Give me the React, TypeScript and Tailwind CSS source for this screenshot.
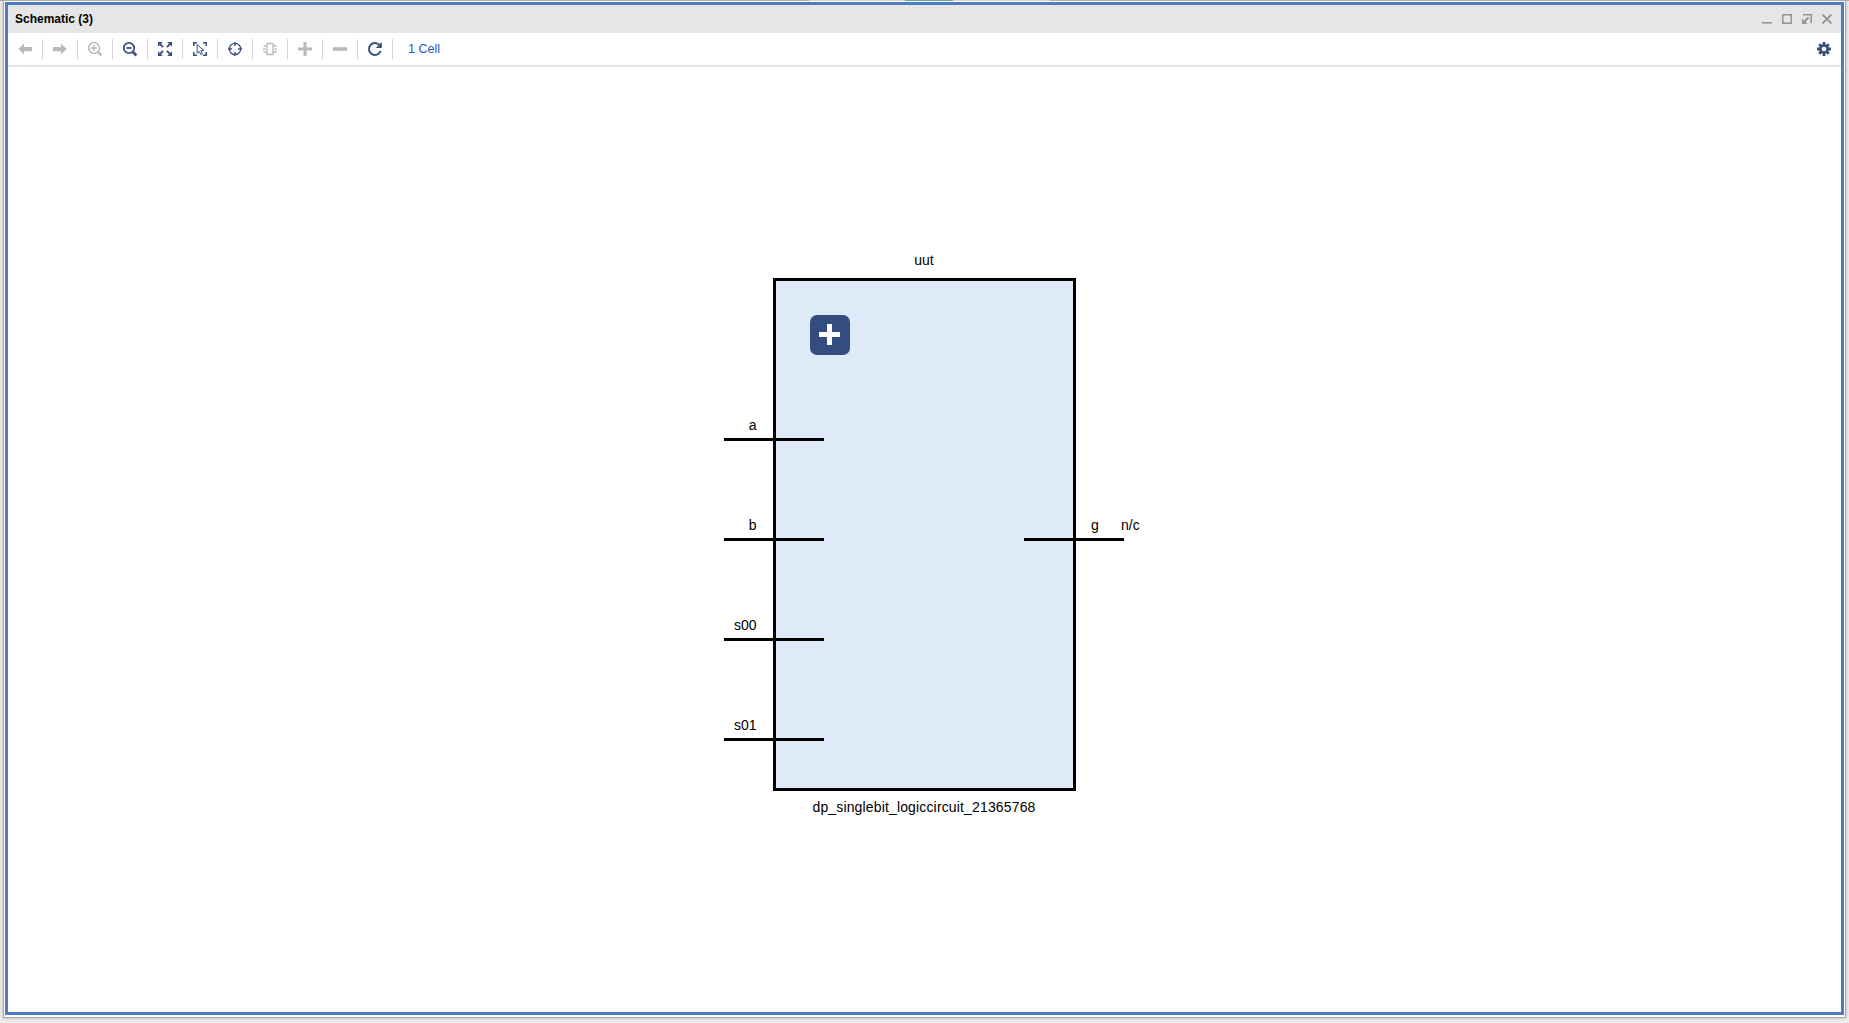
import type { ReactNode } from "react";

const NAVY = "#3a5180";
const GREY = "#bababa";

function Icon({ children, color = NAVY }: { children: ReactNode; color?: string }) {
  return (
    <svg width="20" height="20" viewBox="0 0 20 20" fill="none" stroke={color} color={color}>
      {children}
    </svg>
  );
}

function Tool({ children }: { children: ReactNode }) {
  return (
    <div className="flex h-5 w-[35px] items-center justify-center border-r border-[#d4d4d4]">{children}</div>
  );
}

function Toolbar() {
  return (
    <div className="flex h-[34px] shrink-0 items-center border-b-2 border-[#e4e4e4] bg-white">
      <Tool>
        <Icon color={GREY}>
          <path d="M3.3 10 9 4.6V8h8v4.2H9v3.2z" fill="currentColor" stroke="none" />
        </Icon>
      </Tool>
      <Tool>
        <Icon color={GREY}>
          <path d="M16.7 10 11 4.6V8H3v4.2h8v3.2z" fill="currentColor" stroke="none" />
        </Icon>
      </Tool>
      <Tool>
        <Icon color={GREY}>
          <circle cx="9" cy="9" r="5.4" strokeWidth="1.5" />
          <path d="M6 9h6M9 6v6" strokeWidth="1.4" />
          <path d="m13 13 3.4 3.4" strokeWidth="2.6" />
        </Icon>
      </Tool>
      <Tool>
        <Icon>
          <circle cx="9" cy="9" r="5.2" strokeWidth="1.8" />
          <path d="M6.5 9h5" strokeWidth="1.8" />
          <path d="m13 13 3.4 3.4" strokeWidth="2.8" />
        </Icon>
      </Tool>
      <Tool>
        <Icon>
          <path
            d="M3 3h4.8L3 7.8zM17 3v4.8L12.2 3zM3 17v-4.8L7.8 17zM17 17h-4.8l4.8-4.8z"
            fill="currentColor"
            stroke="none"
          />
          <path d="m4.5 4.5 3.6 3.6M15.5 4.5l-3.6 3.6M4.5 15.5l3.6-3.6M15.5 15.5l-3.6-3.6" strokeWidth="1.9" />
        </Icon>
      </Tool>
      <Tool>
        <Icon>
          <path d="M7 3.8H3.8V7M13 3.8h3.2V7M7 16.2H3.8V13M13 16.2h3.2V13" strokeWidth="1.6" />
          <path d="m7 5.6.2 8.6 2.1-1.8 1.5 3.2 1.6-.8-1.5-3.1 2.8-.4z" strokeWidth="1" />
        </Icon>
      </Tool>
      <Tool>
        <Icon>
          <circle cx="10" cy="10" r="5.7" strokeWidth="1.3" />
          <path d="M10 3v4M10 13v4M3 10h4M13 10h4" strokeWidth="1.5" />
        </Icon>
      </Tool>
      <Tool>
        <Icon color={GREY}>
          <path d="M7 4.5h6v11H7z" strokeWidth="1.3" />
          <path d="M3.5 7H7M3 10h2.5M3.5 13H7M13 7h3.5M14.5 10H17M13 13h3.5" strokeWidth="1.3" />
        </Icon>
      </Tool>
      <Tool>
        <Icon color={GREY}>
          <path d="M3 10h14M10 3v14" strokeWidth="3" />
        </Icon>
      </Tool>
      <Tool>
        <Icon color={GREY}>
          <path d="M3 10h14" strokeWidth="3.6" />
        </Icon>
      </Tool>
      <Tool>
        <Icon>
          <path d="M14.6 6.2A6 6 0 1 0 15.6 12" strokeWidth="2" />
          <path d="M16.8 3v6h-6z" fill="currentColor" stroke="none" />
        </Icon>
      </Tool>
      <span className="mt-px ml-[15px] text-[12.5px] leading-none text-[#2356c8]">1 Cell</span>
      <div className="mr-[7px] ml-auto">
        <Icon>
          <path
            d="M10 3v14M3 10h14M5.2 5.2l9.6 9.6M14.8 5.2l-9.6 9.6"
            strokeWidth="2.8"
          />
          <circle cx="10" cy="10" r="5" fill="currentColor" stroke="none" />
          <circle cx="10" cy="10" r="2.3" fill="white" stroke="none" />
        </Icon>
      </div>
    </div>
  );
}

function TitleBar() {
  return (
    <div className="flex h-7 shrink-0 items-center justify-between bg-[#e6e6e6] pr-[9px] pl-[7px]">
      <span className="text-[12px] leading-none font-bold text-black">Schematic (3)</span>
      <svg width="70" height="10" viewBox="0 0 70 10" fill="none" stroke="#959595">
        <path d="M0 8.8h10" strokeWidth="1.6" />
        <path d="M20.75.75h8.5v8.5h-8.5z" strokeWidth="1.5" />
        <path d="M41 .8h8.2V9" strokeWidth="1.6" />
        <path d="m46.5 3.5-4 4" strokeWidth="1.9" />
        <path d="M40 10V4.5l5.5 5.5z" fill="#959595" stroke="none" />
        <path d="m60.5.5 9 9m0-9-9 9" strokeWidth="1.8" />
      </svg>
    </div>
  );
}

function Schematic() {
  return (
    <div className="relative min-h-0 flex-1 bg-white text-[14px] leading-4 text-black">
      <div className="absolute top-[211px] left-[765px] h-[513px] w-[303px] border-[3px] border-black bg-[#deeaf8]" />
      <div className="absolute top-[248px] left-[802px] flex h-10 w-10 items-center justify-center rounded-[7px] bg-[#334d80]">
        <svg width="40" height="40" viewBox="0 0 40 40" fill="white">
          <path d="M9 17h8V9h5v8h8v5h-8v8h-5v-8H9z" />
        </svg>
      </div>
      <span className="absolute top-[185px] left-[765px] w-[302px] text-center">uut</span>
      <span className="absolute top-[732px] left-[765px] w-[302px] text-center whitespace-nowrap tracking-[0.15px]">
        dp_singlebit_logiccircuit_21365768
      </span>

      <div className="absolute top-[371px] left-[716px] h-[3px] w-[100px] bg-black" />
      <div className="absolute top-[471px] left-[716px] h-[3px] w-[100px] bg-black" />
      <div className="absolute top-[571px] left-[716px] h-[3px] w-[100px] bg-black" />
      <div className="absolute top-[671px] left-[716px] h-[3px] w-[100px] bg-black" />
      <div className="absolute top-[471px] left-[1016px] h-[3px] w-[100px] bg-black" />

      <span className="absolute top-[350px] left-[708.5px] w-10 text-right">a</span>
      <span className="absolute top-[450px] left-[708.5px] w-10 text-right">b</span>
      <span className="absolute top-[550px] left-[708.5px] w-10 text-right">s00</span>
      <span className="absolute top-[650px] left-[708.5px] w-10 text-right">s01</span>
      <span className="absolute top-[450px] left-[1083px]">g</span>
      <span className="absolute top-[450px] left-[1113px]">n/c</span>
    </div>
  );
}

export default function App() {
  return (
    <div className="flex h-[1023px] w-[1849px] flex-col overflow-hidden bg-[#f1efed] font-['Liberation_Sans',Arial,sans-serif]">
      <div className="flex h-px shrink-0 bg-[#a8a8a8] pl-[809px]">
        <div className="w-24 bg-[#eceef2]" />
        <div className="w-12 bg-[#2f9da6]" />
        <div className="w-[97px] bg-[#eceef2]" />
      </div>
      <div className="mr-[3px] ml-[3px] flex h-[1017px] flex-col border-x border-b border-[#a5a5a5] bg-white px-px pt-px pb-[2px] shadow-[0_0_4px_#b5b5b5]">
        <div className="flex min-h-0 flex-1 flex-col border-[3px] border-[#4f7bc0]">
          <TitleBar />
          <Toolbar />
          <Schematic />
        </div>
      </div>
    </div>
  );
}
